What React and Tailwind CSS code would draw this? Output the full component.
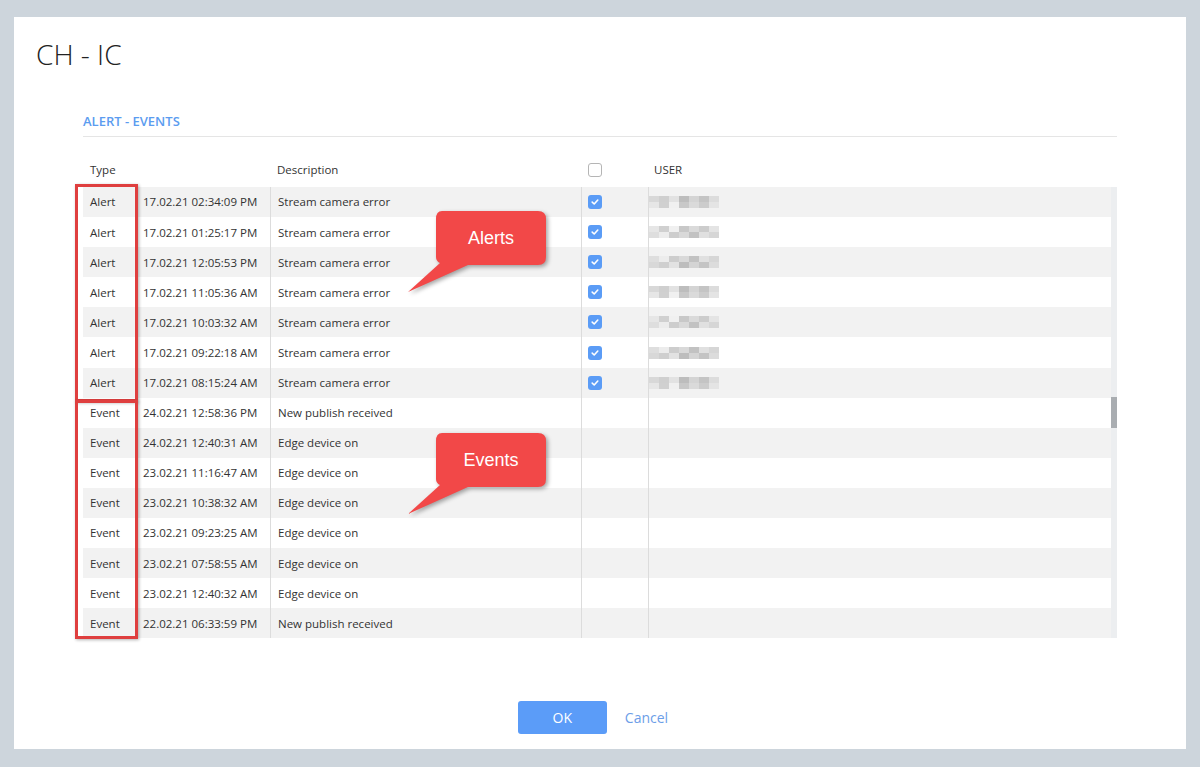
import React from 'react';

const rows = [
  { type: 'Alert', date: '17.02.21 02:34:09 PM', desc: 'Stream camera error', checked: true, user: 0 },
  { type: 'Alert', date: '17.02.21 01:25:17 PM', desc: 'Stream camera error', checked: true, user: 1 },
  { type: 'Alert', date: '17.02.21 12:05:53 PM', desc: 'Stream camera error', checked: true, user: 2 },
  { type: 'Alert', date: '17.02.21 11:05:36 AM', desc: 'Stream camera error', checked: true, user: 0 },
  { type: 'Alert', date: '17.02.21 10:03:32 AM', desc: 'Stream camera error', checked: true, user: 1 },
  { type: 'Alert', date: '17.02.21 09:22:18 AM', desc: 'Stream camera error', checked: true, user: 2 },
  { type: 'Alert', date: '17.02.21 08:15:24 AM', desc: 'Stream camera error', checked: true, user: 0 },
  { type: 'Event', date: '24.02.21 12:58:36 PM', desc: 'New publish received' },
  { type: 'Event', date: '24.02.21 12:40:31 AM', desc: 'Edge device on' },
  { type: 'Event', date: '23.02.21 11:16:47 AM', desc: 'Edge device on' },
  { type: 'Event', date: '23.02.21 10:38:32 AM', desc: 'Edge device on' },
  { type: 'Event', date: '23.02.21 09:23:25 AM', desc: 'Edge device on' },
  { type: 'Event', date: '23.02.21 07:58:55 AM', desc: 'Edge device on' },
  { type: 'Event', date: '23.02.21 12:40:32 AM', desc: 'Edge device on' },
  { type: 'Event', date: '22.02.21 06:33:59 PM', desc: 'New publish received' },
];

// pixelated (blurred) user names
const blurPatterns = [
  ['bg-[#d8d8d8]', 'bg-[#cfcfcf]', 'bg-[#e2e2e2]', 'bg-[#bdbdbd]', 'bg-[#d4d4d4]', 'bg-[#c4c4c4]', 'bg-[#dcdcdc]'],
  ['bg-[#e6e6e6]', 'bg-[#d0d0d0]', 'bg-[#f0f0f0]', 'bg-[#c8c8c8]', 'bg-[#dadada]', 'bg-[#cccccc]', 'bg-[#e4e4e4]'],
  ['bg-[#dedede]', 'bg-[#ececec]', 'bg-[#cdcdcd]', 'bg-[#d9d9d9]', 'bg-[#c2c2c2]', 'bg-[#e0e0e0]', 'bg-[#d6d6d6]'],
];

const BlurredUser = ({ pattern }) => (
  <div className="flex flex-col">
    <div className="flex">
      {blurPatterns[pattern].map((c, i) => (
        <div key={i} className={`w-[10px] h-[6px] ${c}`} />
      ))}
    </div>
    <div className="flex">
      {blurPatterns[(pattern + 1) % 3].map((c, i) => (
        <div key={i} className={`w-[10px] h-[6px] ${c}`} />
      ))}
    </div>
  </div>
);

const Checkbox = ({ checked }) =>
  checked ? (
    <div className="w-[14px] h-[14px] rounded-[3px] bg-[#5b9cf6] flex items-center justify-center">
      <svg width="8" height="8" viewBox="0 0 10 10">
        <path d="M1.5 5.2 L4 7.5 L8.5 2.5" stroke="white" strokeWidth="2" fill="none" strokeLinecap="round" strokeLinejoin="round" />
      </svg>
    </div>
  ) : (
    <div className="w-[14px] h-[14px] rounded-[3px] bg-white border border-[#b5b5b5]" />
  );

const Callout = ({ label, className }) => (
  <div className={`absolute w-[140px] h-[90px] ${className}`}>
    <svg className="absolute left-0 top-0 drop-shadow-[2px_2px_2px_rgba(0,0,0,0.35)]" width="140" height="90" viewBox="0 0 140 90">
      <path d="M34 0 H130 Q138 0 138 8 V46 Q138 54 130 54 H60 L0 81 L32 52 Q28 50 28 46 V8 Q28 0 34 0 Z" fill="#f24848" />
    </svg>
    <div className="absolute left-[28px] top-0 w-[110px] h-[54px] flex items-center justify-center text-white text-[18px] font-['Liberation_Sans',Arial,sans-serif]">
      {label}
    </div>
  </div>
);

export default function App() {
  return (
    <div className="w-[1200px] h-[767px] bg-[#cdd5dc] pt-[17px] pl-[14px] pr-[14px] pb-[18px] font-['Open_Sans',sans-serif] text-[#333]">
      <div className="relative w-full h-full bg-white flex flex-col">
        <h1 className="pl-[22px] pt-[20px] text-[28px] leading-[34px] font-light text-[#222]">CH - IC</h1>

        <div className="mx-[69px] mt-[41px] flex flex-col">
          <div className="text-[13px] leading-[18px] font-semibold text-[#5b9cf0] pb-[6px] border-b border-[#e5e5e5]">ALERT - EVENTS</div>

          {/* header */}
          <div className="flex h-[50px] pt-[15px] items-center text-[11.5px]">
            <div className="w-[187px] pl-[7px]">Type</div>
            <div className="w-[311px] pl-[7px]">Description</div>
            <div className="w-[67px] pl-[7px]"><Checkbox checked={false} /></div>
            <div className="flex-1 pl-[6px]">USER</div>
          </div>

          {/* body */}
          <div className="flex">
            <div className="flex-1 flex flex-col">
              {rows.map((r, i) => (
                <div key={i} className={`flex h-[30.1px] items-center text-[11.5px] ${i % 2 === 0 ? 'bg-[#f2f2f2]' : 'bg-white'}`}>
                  <div className="w-[54px] pl-[7px]">{r.type}</div>
                  <div className="w-[133px] pl-[6px] h-full flex items-center">{r.date}</div>
                  <div className="w-[311px] pl-[7px] h-full flex items-center border-l border-[#dcdcdc]">{r.desc}</div>
                  <div className="w-[67px] pl-[6px] h-full flex items-center border-l border-[#dcdcdc]">
                    {r.checked && <Checkbox checked />}
                  </div>
                  <div className="flex-1 h-full flex items-center border-l border-[#dcdcdc]">
                    {r.user !== undefined && <BlurredUser pattern={r.user} />}
                  </div>
                </div>
              ))}
            </div>
            <div className="w-[6px] bg-[#eceef0] flex flex-col">
              <div className="h-[210px]" />
              <div className="h-[31px] bg-[#a9adb1]" />
            </div>
          </div>
        </div>

        <div className="flex justify-center items-center gap-[18px] mt-[63px] pr-[14px]">
          <button className="w-[89px] h-[33px] rounded-[3px] bg-[#5b9cf8] text-white text-[14px]">OK</button>
          <button className="text-[14px] text-[#6c9ee8]">Cancel</button>
        </div>

        {/* red outlines */}
        <div className="absolute left-[61px] top-[167px] w-[63px] h-[218px] border-[3px] border-[#df3f3f] shadow-[1px_1px_3px_rgba(0,0,0,0.3)]" />
        <div className="absolute left-[61px] top-[383px] w-[63px] h-[239px] border-[3px] border-[#df3f3f] shadow-[1px_1px_3px_rgba(0,0,0,0.3)]" />

        <Callout label="Alerts" className="left-[394px] top-[194px]" />
        <Callout label="Events" className="left-[394px] top-[416px]" />
      </div>
    </div>
  );
}
